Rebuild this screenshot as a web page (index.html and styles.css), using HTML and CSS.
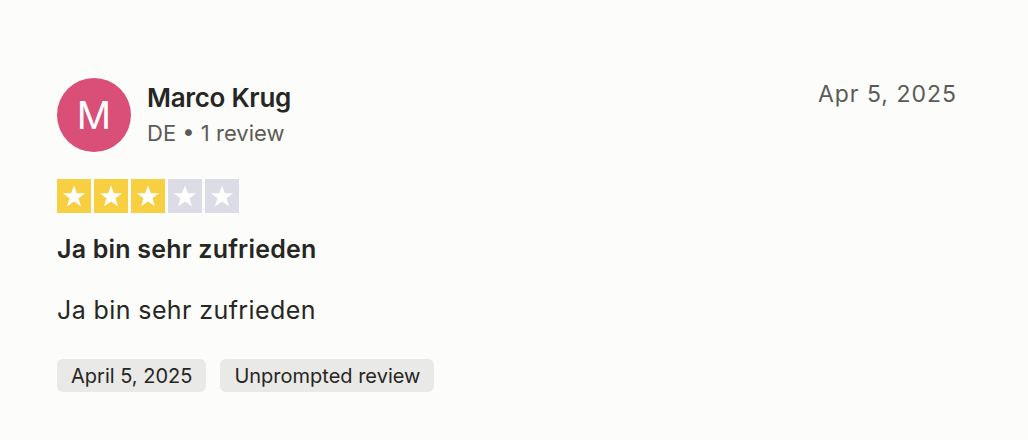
FILE: index.html
```html
<!DOCTYPE html>
<html>
<head>
<meta charset="utf-8">
<link rel="stylesheet" href="styles.css">
</head>
<body>
<article class="review">
  <header class="head">
    <div class="consumer">
      <div class="avatar">M</div>
      <div class="who">
        <div class="name">Marco Krug</div>
        <div class="meta">DE • 1 review</div>
      </div>
    </div>
    <time class="date">Apr 5, 2025</time>
  </header>
  <div class="stars">
    <span class="star on"><svg viewBox="0 0 24 24"><path d="M12 3.6l2.3 6.2h6.6l-5.3 4 2 6.4L12 16.3l-5.6 3.9 2-6.4-5.3-4h6.6z"/></svg></span>
    <span class="star on"><svg viewBox="0 0 24 24"><path d="M12 3.6l2.3 6.2h6.6l-5.3 4 2 6.4L12 16.3l-5.6 3.9 2-6.4-5.3-4h6.6z"/></svg></span>
    <span class="star on"><svg viewBox="0 0 24 24"><path d="M12 3.6l2.3 6.2h6.6l-5.3 4 2 6.4L12 16.3l-5.6 3.9 2-6.4-5.3-4h6.6z"/></svg></span>
    <span class="star"><svg viewBox="0 0 24 24"><path d="M12 3.6l2.3 6.2h6.6l-5.3 4 2 6.4L12 16.3l-5.6 3.9 2-6.4-5.3-4h6.6z"/></svg></span>
    <span class="star"><svg viewBox="0 0 24 24"><path d="M12 3.6l2.3 6.2h6.6l-5.3 4 2 6.4L12 16.3l-5.6 3.9 2-6.4-5.3-4h6.6z"/></svg></span>
  </div>
  <h2 class="title">Ja bin sehr zufrieden</h2>
  <p class="text">Ja bin sehr zufrieden</p>
  <div class="chips">
    <span class="chip">April 5, 2025</span>
    <span class="chip">Unprompted review</span>
  </div>
</article>
</body>
</html>
```
FILE: styles.css
```css
html, body {
  margin: 0;
  padding: 0;
  background: #fcfcfb;
}
body {
  font-family: Inter, "Noto Sans", sans-serif;
  color: #262623;
}
.review {
  padding: 78px 71px 0 57px;
}
.head {
  display: flex;
  justify-content: space-between;
  align-items: flex-start;
}
.consumer {
  display: flex;
  align-items: center;
  gap: 16px;
}
.avatar {
  width: 74px;
  height: 74px;
  border-radius: 50%;
  background: #d94f78;
  color: #fff;
  display: flex;
  align-items: center;
  justify-content: center;
  font-size: 38px;
  font-weight: 400;
}
.who {
  display: flex;
  flex-direction: column;
  gap: 4px;
}
.name {
  font-size: 26px;
  font-weight: 600;
  line-height: 32px;
  letter-spacing: -0.3px;
}
.meta {
  font-size: 22px;
  line-height: 30px;
  color: #5b5b56;
}
.date {
  margin-top: 1px;
  font-size: 23px;
  line-height: 30px;
  color: #5b5b56;
  letter-spacing: 1px;
}
.stars {
  display: flex;
  gap: 3px;
  margin-top: 27px;
}
.star {
  width: 34px;
  height: 34px;
  background: #dcdce6;
  display: flex;
  align-items: center;
  justify-content: center;
}
.star.on {
  background: #f8cf40;
}
.star svg {
  width: 30px;
  height: 30px;
  fill: #fff;
}
.title {
  margin: 21px 0 0;
  font-size: 25px;
  font-weight: 600;
  line-height: 30px;
  letter-spacing: 0.2px;
}
.text {
  margin: 31px 0 0;
  font-size: 25px;
  line-height: 30px;
  letter-spacing: 0.4px;
}
.chips {
  display: flex;
  gap: 14px;
  margin-top: 34px;
}
.chip {
  background: #e9e9e7;
  border-radius: 6px;
  padding: 0 14px;
  height: 33px;
  display: flex;
  align-items: center;
  font-size: 20px;
}
```
